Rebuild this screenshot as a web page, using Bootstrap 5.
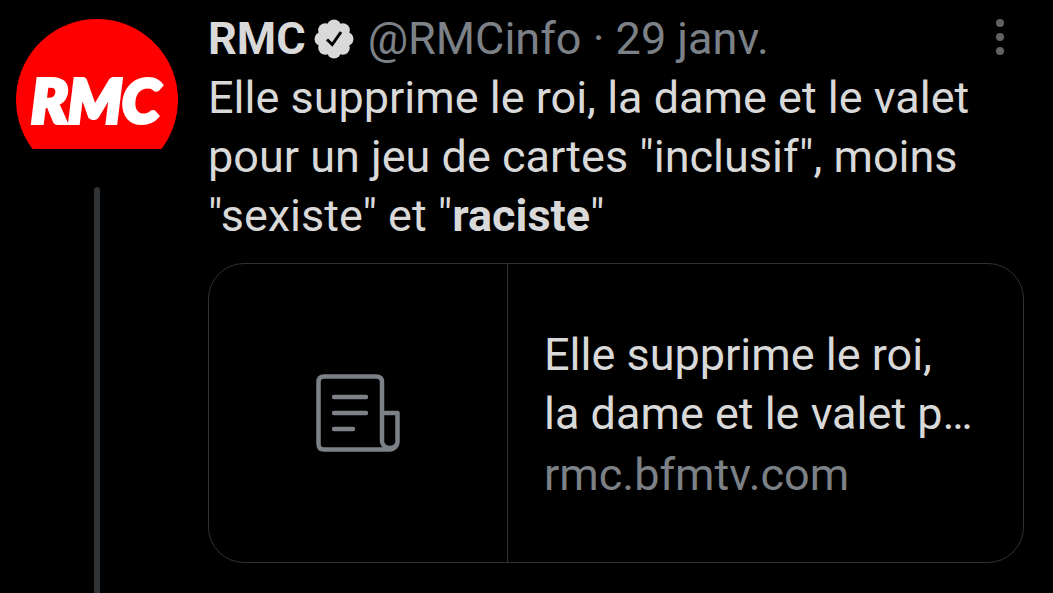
<!DOCTYPE html>
<html lang="fr" data-bs-theme="dark">
<head>
<meta charset="utf-8">
<meta name="viewport" content="width=device-width, initial-scale=1">
<title>RMC</title>
<link href="https://cdn.jsdelivr.net/npm/bootstrap@5.3.0/dist/css/bootstrap.min.css" rel="stylesheet">
<style>
  body { background: #000; color: #d9d9d9; font-family: Roboto, sans-serif; font-size: 45px; line-height: 59px; }
  a { color: inherit; text-decoration: none; }
  .tweet { padding-left: 16px; padding-right: 29px; gap: 30px; }
  .rail { width: 162px; padding-top: 18px; }
  .thread-line { width: 6px; margin-top: 6px; border-radius: 3px 3px 0 0; background: #2f3336; }
  .tweet-body { padding-top: 9px; padding-bottom: 30px; min-width: 0; }
  .soft { color: #7c8187; }
  .author { gap: 8px; }
  .handle { margin-left: 6px; }
  .menu-btn { width: 48px; height: 48px; color: #5f6164; }
  .preview { margin-top: 18px; min-height: 300px; border: 1px solid #2f3336; border-radius: 36px; }
  .preview-icon { width: 299px; border-right: 1px solid #2f3336; }
  .preview-text { padding: 2px 36px 0; }
  .source { margin-top: 2px; }
</style>
</head>
<body>
<article class="tweet d-flex min-vh-100">
  <div class="rail d-flex flex-column align-items-center flex-shrink-0">
    <a href="#" aria-label="RMC">
      <svg class="d-block" width="162" height="163" viewBox="0 0 162 163">
        <path d="M16.500 131A81 81 0 1 1 145.500 131Z" fill="#f00"/>
        <text x="15" y="105" font-family="Lato, sans-serif" font-size="61" font-weight="900" font-style="italic" fill="#fff" stroke="#fff" stroke-width="4">RMC</text>
      </svg>
    </a>
    <div class="thread-line flex-grow-1"></div>
  </div>
  <div class="tweet-body flex-grow-1">
    <header class="author d-flex align-items-center">
      <a href="#" class="fw-bold">RMC</a>
      <svg width="40" height="40" viewBox="0 0 40 40" role="img" aria-label="Compte certifié">
        <g fill="#d9d9d9">
          <circle cx="20" cy="20" r="15"/>
          <circle cx="20" cy="7.500" r="7"/><circle cx="28.800" cy="11.200" r="7"/>
          <circle cx="32.500" cy="20" r="7"/><circle cx="28.800" cy="28.800" r="7"/>
          <circle cx="20" cy="32.500" r="7"/><circle cx="11.200" cy="28.800" r="7"/>
          <circle cx="7.500" cy="20" r="7"/><circle cx="11.200" cy="11.200" r="7"/>
        </g>
        <path d="M13 20.500 18.200 25.500 27 13" fill="none" stroke="#000" stroke-width="3"/>
      </svg>
      <span class="handle soft text-nowrap"><a href="#">@RMCinfo</a> · <time>29 janv.</time></span>
      <button type="button" class="menu-btn btn p-0 border-0 ms-auto d-flex align-items-center justify-content-center" aria-label="Plus d'options">
        <svg width="8" height="42" viewBox="0 0 8 42" fill="currentColor"><circle cx="4" cy="5" r="4"/><circle cx="4" cy="19" r="4"/><circle cx="4" cy="33" r="4"/></svg>
      </button>
    </header>
    <p class="mb-0">Elle supprime le roi, la dame et le valet pour un jeu de cartes "inclusif", moins "sexiste" et "<strong>raciste</strong>"</p>
    <a href="#" class="preview d-flex overflow-hidden">
      <span class="preview-icon d-flex align-items-center justify-content-center flex-shrink-0">
        <svg width="84" height="78" viewBox="0 0 84 78" fill="none" stroke="#7c8187" stroke-width="4.500" stroke-linecap="round" stroke-linejoin="round">
          <path d="M74 75.500H8Q2.500 75.500 2.500 70V8Q2.500 2.500 8 2.500H60Q66 2.500 66 8V68A8 8 0 0 0 81.500 68V39H67M74 75.500A8 8 0 0 0 81.500 68"/>
          <path d="M18 23H50M18 39H50M18 55H37"/>
        </svg>
      </span>
      <span class="preview-text d-flex flex-column justify-content-center">
        <span>Elle supprime le roi,<br>la dame et le valet p…</span>
        <span class="source soft">rmc.bfmtv.com</span>
      </span>
    </a>
  </div>
</article>
<script src="https://cdn.jsdelivr.net/npm/bootstrap@5.3.0/dist/js/bootstrap.bundle.min.js"></script>
</body>
</html>
